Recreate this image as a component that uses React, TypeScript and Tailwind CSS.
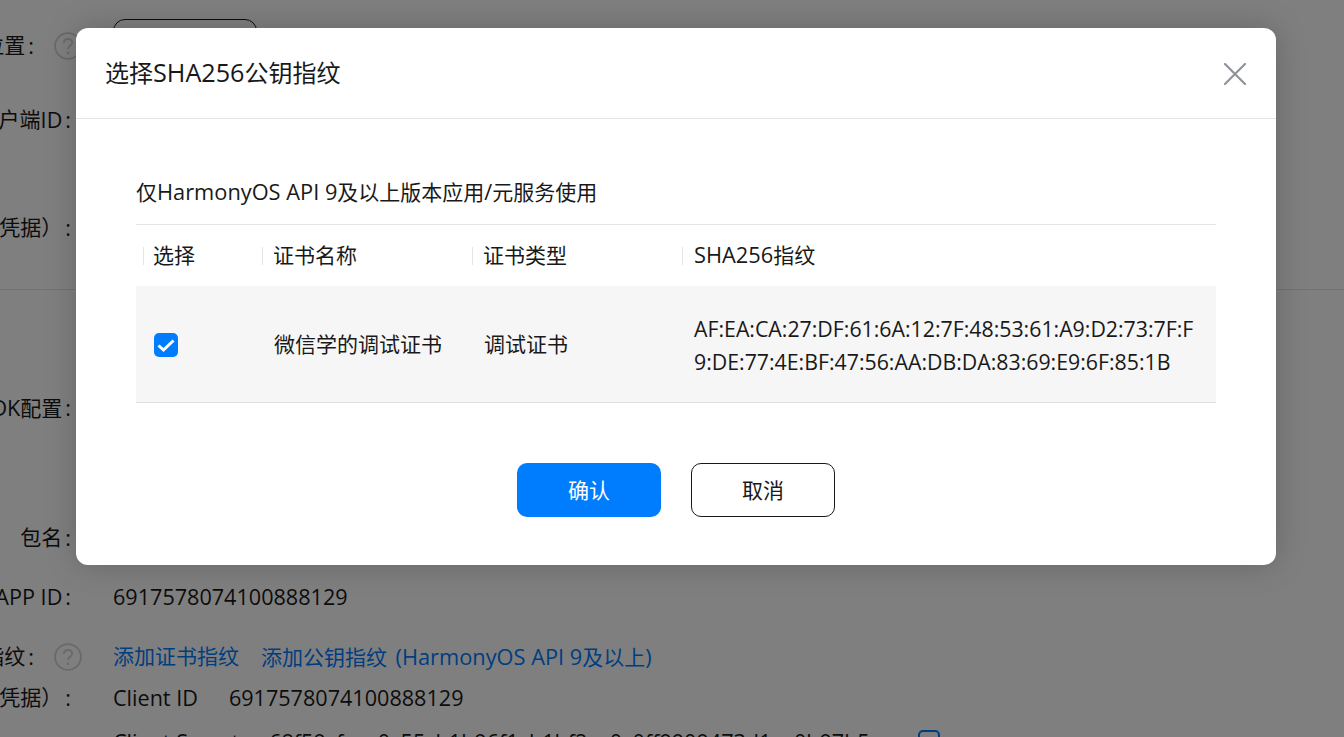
import type { ReactNode } from "react";

function Help() {
  return (
    <svg width="28" height="28" viewBox="0 0 26 26" className="shrink-0" fill="none">
      <circle cx="13" cy="13" r="12" stroke="#d4d4d4" strokeWidth="1.7" />
      <path d="M9.2 10.2c0-2.2 1.6-3.7 3.8-3.7s3.8 1.4 3.8 3.4c0 2.9-3.8 3-3.8 6" stroke="#d4d4d4" strokeWidth="1.7" fill="none" />
      <circle cx="13" cy="19.4" r="1.2" fill="#d4d4d4" />
    </svg>
  );
}
function L({ children }: { children: ReactNode }) {
  return <span className="text-[21.6px]">{children}</span>;
}
function Colon() {
  return <span className="text-[21.6px] ml-[3px]">:</span>;
}
function Label({ children, help }: { children: ReactNode; help?: boolean }) {
  return (
    <div className="w-[113px] flex items-center justify-end whitespace-nowrap shrink-0">
      {children}
      {help ? (
        <div className="w-[79px] flex justify-end pr-[31px] shrink-0"><Help /></div>
      ) : (
        <div className="w-[42px] shrink-0" />
      )}
    </div>
  );
}
function HeadCell({ w, ml, t }: { w: string; ml: string; t: ReactNode }) {
  return (
    <div className={`${w} flex items-center`}>
      <i className={`${ml} w-px h-[18px] bg-[#e5e5e5]`} />
      {t}
    </div>
  );
}
export default function App() {
  return (
    <div className="relative w-[1344px] h-[737px] overflow-hidden bg-white text-[21px] text-[#191919] font-['Open_Sans','Noto_Sans_CJK_SC',sans-serif]">
      <div className="flex flex-col w-[1344px] pt-[19px]">
        <div className="flex items-center h-[54px]">
          <Label help>位置<Colon /></Label>
          <div className="w-[144px] h-[54px] border border-[#191919] rounded-[12px]" />
        </div>
        <div className="flex items-center h-[94px]"><Label>客户端<L>ID</L><Colon /></Label></div>
        <div className="flex items-center h-[122px]"><Label>（凭据）<Colon /></Label></div>
        <div className="h-[1px] bg-[#e5e5e5]" />
        <div className="flex items-center h-[237px]"><Label><L>SDK</L>配置<Colon /></Label></div>
        <div className="flex items-center h-[22px]"><Label>包名<Colon /></Label></div>
        <div className="flex items-center h-[60px] mt-[18px]">
          <Label><L>APP ID</L><Colon /></Label>
          <L>6917578074100888129</L>
        </div>
        <div className="flex items-center h-[60px]">
          <Label help>指纹<Colon /></Label>
          <span className="text-[#007dff]">添加证书指纹</span>
          <span className="ml-[22px] text-[#007dff]">添加公钥指纹 <span className="ml-[3px] text-[21.8px]">(HarmonyOS API 9</span>及以上<L>)</L></span>
        </div>
        <div className="flex items-center h-[22px]">
          <Label>（凭据）<Colon /></Label>
          <L>Client ID</L>
          <span className="ml-[31px]"><L>6917578074100888129</L></span>
        </div>
        <div className="flex items-center h-[22px] mt-[22px] relative">
          <Label>{null}</Label>
          <L>Client Secret</L>
          <span className="ml-[30px]"><L>68f59cfaec0c55cb1b96f1cb1bf2ec0c0ff9909473d1ec0b97b5a</L></span>
          <div className="absolute left-[918px] top-[-1px] w-[22px] h-[22px] border-2 border-[#007dff] rounded-[5px]" />
        </div>
      </div>

      <div className="absolute inset-0 bg-black/50 flex items-start">
        <div className="ml-[76px] mt-[28px] w-[1200px] h-[537px] bg-white rounded-[12px] shadow-[0_0_32px_rgba(0,0,0,0.2)] flex flex-col">
          <div className="h-[91px] border-b border-[#e5e5e5] flex items-center justify-between pl-[29px] pr-[30px] shrink-0">
            <span className="text-[24px] whitespace-nowrap">选择<span className="text-[25.2px]">SHA256</span>公钥指纹</span>
            <svg width="22" height="22" viewBox="0 0 22 22" fill="none" className="mt-[1px]">
              <path d="M1 1 21 21M21 1 1 21" stroke="#8f9399" strokeWidth="2.2" strokeLinecap="round" />
            </svg>
          </div>
          <div className="px-[60px] flex flex-col flex-1">
            <div className="h-[106px] border-b border-[#e5e5e5] flex items-end pb-[15px] whitespace-pre"><span>仅<span className="text-[21.8px]">HarmonyOS API 9</span>及以上版本应用<L>/</L>元服务使用</span></div>
            <div className="flex h-[61px] items-center">
              <HeadCell w="w-[120px]" ml="ml-[7px]" t={<span className="ml-[9px]">选择</span>} />
              <HeadCell w="w-[210px]" ml="ml-[6px]" t={<span className="ml-[10px]">证书名称</span>} />
              <HeadCell w="w-[210px]" ml="ml-[6px]" t={<span className="ml-[10px]">证书类型</span>} />
              <HeadCell w="flex-1" ml="ml-[6px]" t={<span className="ml-[11px]"><span className="text-[21.8px]">SHA256</span>指纹</span>} />
            </div>
            <div className="flex h-[117px] items-center pt-[2px] bg-[#f6f6f6] border-b border-[#e0e0e0]">
              <div className="w-[120px] pl-[18px]">
                <div className="w-[24px] h-[24px] rounded-[5px] bg-[#007dff] flex items-center justify-center">
                  <svg width="24" height="24" viewBox="0 0 24 24" fill="none"><path d="M4.5 12.5 9.5 17 19.5 7.5" stroke="#fff" strokeWidth="3" /></svg>
                </div>
              </div>
              <div className="w-[210px] pl-[18px]">微信学的调试证书</div>
              <div className="w-[210px] pl-[18px]">调试证书</div>
              <div className="flex-1 pl-[18px] pr-[18px] break-all leading-[33px] text-[21.3px]">AF:EA:CA:27:DF:61:6A:12:7F:48:53:61:A9:D2:73:7F:F9:DE:77:4E:BF:47:56:AA:DB:DA:83:69:E9:6F:85:1B</div>
            </div>
            <div className="flex justify-center gap-[30px] mt-[60px]">
              <button className="w-[144px] h-[54px] rounded-[10px] bg-[#007dff] text-white pt-[2px]">确认</button>
              <button className="w-[144px] h-[54px] rounded-[10px] border border-[#191919] bg-white pt-[2px]">取消</button>
            </div>
          </div>
        </div>
      </div>
    </div>
  );
}
